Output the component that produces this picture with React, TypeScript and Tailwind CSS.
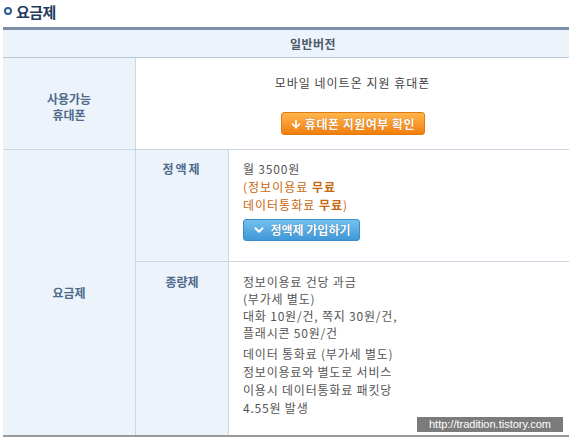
import { ArrowDown, ChevronDown } from 'lucide-react';

const font = "font-['Noto_Sans_CJK_KR','Liberation_Sans',sans-serif]";

export default function App() {
    return (
        <div className={`relative w-[584px] h-[442px] bg-white text-[12px] text-[#555] ${font}`}>
            {/* 제목 */}
            <div className="h-[27px] flex items-center gap-[4px] pl-[4px] pb-[5px]">
                <span className="w-[8px] h-[8px] rounded-full border-2 border-[#2f5d96]" />
                <h2 className="text-[15px] font-bold text-[#1f3a60] leading-none tracking-[-0.5px]">요금제</h2>
            </div>

            <div className="ml-[3px] w-[566px]">
                {/* 헤더 */}
                <div className="h-[31px] border-t-[3px] border-b border-t-[#7d8fa6] border-b-[#b9c6d6] bg-[#edf3fb] flex items-center justify-center pl-[54px]">
                    <span className="font-bold text-[#4b5866] tracking-[0.5px]">일반버전</span>
                </div>

                {/* 사용가능 휴대폰 */}
                <div className="flex h-[92px] border-b border-[#ccd7e4]">
                    <div className="w-[133px] border-r border-[#ccd7e4] bg-[#edf3fb] flex items-center justify-center pt-[6px]">
                        <p className="text-center font-bold text-[#4f6b8c] leading-[16px]">
                            사용가능
                            <br />
                            휴대폰
                        </p>
                    </div>
                    <div className="flex-1 flex flex-col items-center pt-[16px]">
                        <p className="leading-[18px] text-[#444] tracking-[1px]">모바일 네이트온 지원 휴대폰</p>
                        <button className="mt-[20px] w-[144px] h-[23px] rounded-[3px] border border-[#e27a12] bg-gradient-to-b from-[#ffb54a] to-[#f17f05] text-white font-bold flex items-center justify-center gap-[3px] tracking-[0.5px] [text-shadow:0_0_1px_#b55a00]">
                            <ArrowDown size={12} strokeWidth={3.5} />
                            <span>휴대폰 지원여부 확인</span>
                        </button>
                    </div>
                </div>

                {/* 요금제 */}
                <div className="flex border-b-2 border-[#9a9a9a]">
                    <div className="w-[133px] border-r border-[#ccd7e4] bg-[#edf3fb] flex items-center justify-center">
                        <span className="font-bold text-[#4f6b8c]">요금제</span>
                    </div>
                    <div className="flex-1 flex flex-col">
                        {/* 정액제 */}
                        <div className="flex h-[112px] border-b border-[#ccd7e4]">
                            <div className="w-[93px] border-r border-[#ccd7e4] bg-[#edf3fb] pt-[10px] text-center">
                                <span className="font-bold text-[#4f6b8c] tracking-[2px] leading-[18px]">정액제</span>
                            </div>
                            <div className="flex-1 pl-[14px] pt-[10px] leading-[18px] tracking-[0.8px]">
                                <p>월 3500원</p>
                                <p className="text-[#c8670e] tracking-[1px]">
                                    (정보이용료 <b>무료</b>
                                </p>
                                <p className="text-[#c8670e] tracking-[1px]">
                                    데이터통화료 <b>무료</b>)
                                </p>
                                <button className="mt-[5px] w-[117px] h-[22px] rounded-[3px] border border-[#3c8dcc] bg-gradient-to-b from-[#72c0ef] to-[#3f98d8] text-white font-bold flex items-center justify-center gap-[4px] tracking-normal [text-shadow:0_0_1px_#1f5f99]">
                                    <ChevronDown size={14} strokeWidth={3.5} />
                                    <span>정액제 가입하기</span>
                                </button>
                            </div>
                        </div>

                        {/* 종량제 */}
                        <div className="flex h-[173px]">
                            <div className="w-[93px] border-r border-[#ccd7e4] bg-[#edf3fb] pt-[11px] text-center">
                                <span className="font-bold text-[#4f6b8c] leading-[18px]">종량제</span>
                            </div>
                            <div className="flex-1 pl-[14px] pt-[11px] tracking-[0.8px]">
                                <div className="leading-[17px]">
                                    <p>정보이용료 건당 과금</p>
                                    <p>(부가세 별도)</p>
                                    <p>대화 10원/건, 쪽지 30원/건,</p>
                                    <p>플래시콘 50원/건</p>
                                </div>
                                <div className="mt-[4px] leading-[18px]">
                                    <p>데이터 통화료 (부가세 별도)</p>
                                    <p>정보이용료와 별도로 서비스</p>
                                    <p>이용시 데이터통화료 패킷당</p>
                                    <p>4.55원 발생</p>
                                </div>
                            </div>
                        </div>
                    </div>
                </div>
            </div>

            {/* 워터마크 */}
            <div className="absolute left-[417px] top-[417px] w-[146px] h-[15px] bg-[#7b7b7b] text-white text-[11px] leading-[15px] text-center font-['Liberation_Sans',sans-serif]">
                http://tradition.tistory.com
            </div>
        </div>
    );
}
